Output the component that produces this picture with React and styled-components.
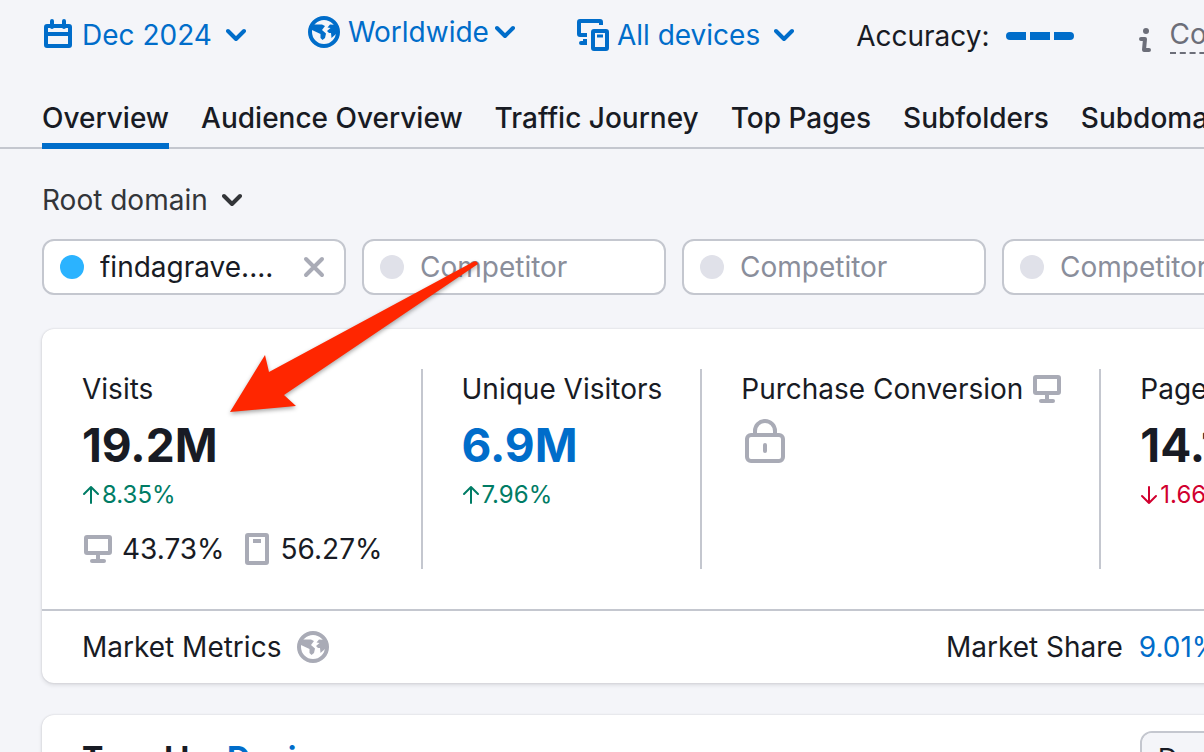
import React from "react";
import styled, { createGlobalStyle, css } from "styled-components";

const GlobalStyle = createGlobalStyle`
  * {
    box-sizing: border-box;
  }
  body {
    margin: 0;
    background: #f4f5f9;
    color: #181b24;
    font-family: Inter, "Liberation Sans", sans-serif;
    font-size: 28px;
    line-height: 40px;
  }
  button, input {
    font: inherit;
    color: inherit;
  }
  svg {
    display: block;
    flex: none;
  }
`;

const Screen = styled.div`
  position: relative;
  height: 100vh;
  overflow: hidden;
`;

const Page = styled.div`
  min-width: 1580px;
`;

const Filters = styled.div`
  display: flex;
  align-items: flex-start;
  gap: 62px;
  padding: 16px 42px 0;
`;

const PlainButton = styled.button`
  display: flex;
  align-items: center;
  padding: 0;
  border: 0;
  background: none;
  color: ${(props) => props.$color || "#006dca"};
  line-height: ${(props) => props.$line || "38px"};
  white-space: nowrap;
  cursor: pointer;
`;

const Label = styled.span`
  margin-right: ${(props) => (props.$tight ? "6px" : "14px")};
  svg + & {
    margin-left: 8px;
  }
`;

const Accuracy = styled.div`
  display: flex;
  align-items: center;
  gap: 16px;
  line-height: 40px;
`;

const Meter = styled.div`
  display: flex;
  gap: 4px;
  border-radius: 4px;
  overflow: hidden;
`;

const MeterBar = styled.span`
  width: 20px;
  height: 8px;
  background: #006dca;
`;

const Info = styled.div`
  display: flex;
  align-items: flex-end;
  gap: 18px;
  padding-left: 2px;
  color: #6c6e79;
  line-height: 36px;
`;

const InfoLink = styled.a`
  color: inherit;
  text-decoration: none;
  border-bottom: 2px dashed #6c6e79;
`;

const Tabs = styled.nav`
  display: flex;
  gap: 32px;
  margin-top: 42px;
  padding: 0 42px;
  box-shadow: inset 0 -2px #c4c7cf;
`;

const Tab = styled.a`
  padding-bottom: 5px;
  border-bottom: 6px solid ${(props) => (props.$active ? "#006dca" : "transparent")};
  color: inherit;
  font-weight: 500;
  text-decoration: none;
  white-space: nowrap;
`;

const Main = styled.main`
  padding: 32px 42px;
`;

const Domains = styled.div`
  display: flex;
  gap: 16px;
  margin: 20px 0 34px;
`;

const DomainBox = styled.div`
  display: flex;
  align-items: center;
  gap: 16px;
  width: 304px;
  height: 56px;
  padding: 0 18px 0 16px;
  border: 2px solid #c4c7cf;
  border-radius: 12px;
  background: #fff;
`;

const Dot = styled.span`
  flex: none;
  width: 24px;
  height: 24px;
  border-radius: 50%;
  background: ${(props) => props.$color};
`;

const DomainInput = styled.input`
  flex: 1;
  min-width: 0;
  padding: 0;
  border: 0;
  outline: 0;
  background: none;
  &::placeholder {
    color: #8a8e9b;
    opacity: 1;
  }
`;

const Card = styled.section`
  margin-bottom: 32px;
  border-radius: 12px;
  background: #fff;
  box-shadow: 0 0 2px rgba(25, 27, 35, 0.16), 0 2px 4px rgba(25, 27, 35, 0.12);
`;

const Metrics = styled.div`
  display: flex;
  padding: 40px;
`;

const Metric = styled.div`
  min-height: 200px;
  white-space: nowrap;
  & + & {
    margin-left: 38px;
    padding-left: 39px;
    border-left: 2px solid #c4c7cf;
  }
`;

const MetricName = styled.div`
  display: flex;
  align-items: center;
  gap: 8px;
`;

const valueText = css`
  display: block;
  margin: 8px 0 6px;
  font-size: 46px;
  font-weight: 700;
  line-height: 56px;
`;

const Value = styled.div`
  ${valueText}
`;

const ValueLink = styled.a`
  ${valueText}
  color: #006dca;
  text-decoration: none;
`;

const Change = styled.div`
  display: flex;
  align-items: center;
  gap: 1px;
  color: ${(props) => (props.$down ? "#d1002f" : "#007c65")};
  font-size: 24px;
  line-height: 32px;
`;

const Split = styled.div`
  display: flex;
  align-items: center;
  gap: 10px;
  margin-top: 18px;
`;

const SplitValue = styled.span`
  & + svg {
    margin-left: 10px;
  }
`;

const LockButton = styled(PlainButton)`
  margin-top: 8px;
`;

const Market = styled.div`
  display: grid;
  grid-template-columns: 3fr 2fr;
  gap: 36px;
  padding: 16px 40px;
  border-top: 2px solid #c4c7cf;
`;

const MarketItem = styled.div`
  display: flex;
  align-items: center;
  gap: 16px;
`;

const MarketLink = styled.a`
  color: #006dca;
  text-decoration: none;
`;

const TrendHead = styled.div`
  display: flex;
  align-items: flex-start;
  justify-content: space-between;
  padding: 16px 40px 40px;
`;

const TrendTitle = styled.h2`
  margin: 8px 0 0;
  font-size: 32px;
  font-weight: 700;
`;

const Periods = styled.div`
  display: flex;
  border: 2px solid #c4c7cf;
  border-radius: 12px;
  background: #fff;
  overflow: hidden;
`;

const Period = styled.button`
  height: 52px;
  padding: 0 16px;
  border: 0;
  background: ${(props) => (props.$active ? "#f4f5f9" : "none")};
  & + & {
    border-left: 2px solid #c4c7cf;
  }
`;

const Pointer = styled.svg`
  position: absolute;
  top: 250px;
  left: 220px;
  pointer-events: none;
  filter: drop-shadow(0 2px 2px rgba(0, 0, 0, 0.35));
`;

const Chevron = () => (
  <svg width="20" height="14" viewBox="0 0 20 14" fill="none" stroke="currentColor" strokeWidth="4" strokeLinecap="round" strokeLinejoin="round" aria-hidden="true">
    <path d="M2 3l8 8 8-8" />
  </svg>
);

const CalendarIcon = () => (
  <svg width="32" height="32" viewBox="0 0 32 32" fill="none" stroke="currentColor" strokeWidth="4" aria-hidden="true">
    <rect x="4" y="7" width="24" height="20" rx="1" />
    <path d="M4 15h24" />
    <path d="M10 2v6M22 2v6" strokeLinecap="round" />
  </svg>
);

const GlobeIcon = () => (
  <svg width="32" height="32" viewBox="0 0 32 32" aria-hidden="true">
    <circle cx="16" cy="16" r="14" fill="none" stroke="currentColor" strokeWidth="4" />
    <path d="M3 11l3-2.500h8l3 1.500-3 4 4 3.500-1 4.500-2.500 2-2-2v-4L4 14z" fill="currentColor" />
    <path d="M29 9l-7-.5-2.500 3 3 .5-3.500 3 2 2h2l.5 5 4.500-4 2-4z" fill="currentColor" />
  </svg>
);

const DevicesIcon = () => (
  <svg width="32" height="32" viewBox="0 0 32 32" fill="none" stroke="currentColor" strokeWidth="4" aria-hidden="true">
    <path d="M24 6V3a1 1 0 0 0-1-1H3a1 1 0 0 0-1 1v12a1 1 0 0 0 1 1h7" />
    <path d="M10 20v6H4a2 2 0 0 1 0-4h2v-2z" fill="currentColor" stroke="none" />
    <rect x="16" y="12" width="14" height="18" rx="1" />
    <path d="M20 17h6" strokeWidth="3" />
  </svg>
);

const DesktopIcon = () => (
  <svg width="30" height="30" viewBox="0 0 30 30" fill="none" stroke="#a9abb6" strokeWidth="4" aria-hidden="true">
    <rect x="4" y="3" width="24" height="16" rx="1" />
    <path d="M16 21v6" />
    <path d="M10 27h12" strokeLinecap="round" />
  </svg>
);

const MobileIcon = () => (
  <svg width="26" height="32" viewBox="0 0 26 32" fill="none" stroke="#a9abb6" strokeWidth="4" aria-hidden="true">
    <rect x="2" y="2" width="20" height="28" rx="1" />
    <path d="M8 8h8" />
  </svg>
);

const LockIcon = () => (
  <svg width="48" height="48" viewBox="0 0 48 48" fill="none" stroke="#a9abb6" strokeWidth="4" aria-hidden="true">
    <rect x="6" y="18" width="36" height="26" rx="4" />
    <path d="M14 18v-4a10 10 0 0 1 20 0v4" />
    <path d="M24 28v6" strokeLinecap="round" />
  </svg>
);

const CloseIcon = () => (
  <svg width="24" height="24" viewBox="0 0 24 24" fill="none" stroke="#a9abb6" strokeWidth="4" strokeLinecap="round" aria-hidden="true">
    <path d="M4 4l16 16M20 4L4 20" />
  </svg>
);

const InfoIcon = () => (
  <svg width="14" height="26" viewBox="0 0 14 26" fill="none" stroke="currentColor" strokeWidth="4" strokeLinecap="round" strokeLinejoin="round" aria-hidden="true">
    <circle cx="8" cy="3" r="3" fill="currentColor" stroke="none" />
    <path d="M3 11h4L6 22h5" />
  </svg>
);

const ArrowIcon = ({ down }) => (
  <svg width="19" height="20" viewBox="0 0 19 20" fill="none" stroke="currentColor" strokeWidth="2" strokeLinecap="round" strokeLinejoin="round" aria-hidden="true">
    <path d={down ? "M9 2v16M2 11l7 7 7-7" : "M9 18V2M2 9l7-7 7 7"} />
  </svg>
);

const tabs = [
  "Overview",
  "Audience Overview",
  "Traffic Journey",
  "Top Pages",
  "Subfolders",
  "Subdomains",
];

const App = () => {
  return (
    <Screen>
      <GlobalStyle />
      <Page>
        <Filters>
          <PlainButton>
            <CalendarIcon />
            <Label>Dec 2024</Label>
            <Chevron />
          </PlainButton>
          <PlainButton $line="32px">
            <GlobeIcon />
            <Label $tight>Worldwide</Label>
            <Chevron />
          </PlainButton>
          <PlainButton>
            <DevicesIcon />
            <Label>All devices</Label>
            <Chevron />
          </PlainButton>
          <Accuracy>
            Accuracy:
            <Meter>
              <MeterBar />
              <MeterBar />
              <MeterBar />
            </Meter>
          </Accuracy>
          <Info>
            <InfoIcon />
            <InfoLink href="#confidence">Confidence</InfoLink>
          </Info>
        </Filters>

        <Tabs>
          {tabs.map((tab, key) => (
            <Tab key={tab} href="#" $active={key === 0}>
              {tab}
            </Tab>
          ))}
        </Tabs>

        <Main>
          <PlainButton $color="#333539">
            <Label>Root domain</Label>
            <Chevron />
          </PlainButton>

          <Domains>
            <DomainBox>
              <Dot $color="#2bb3ff" />
              <DomainInput aria-label="Domain" defaultValue="findagrave...." />
              <PlainButton aria-label="Clear domain">
                <CloseIcon />
              </PlainButton>
            </DomainBox>
            {[1, 2, 3].map((key) => (
              <DomainBox key={key}>
                <Dot $color="#e0e1e9" />
                <DomainInput aria-label={"Competitor " + key} placeholder="Competitor" />
              </DomainBox>
            ))}
          </Domains>

          <Card>
            <Metrics>
              <Metric>
                <MetricName>Visits</MetricName>
                <Value>19.2M</Value>
                <Change>
                  <ArrowIcon />
                  8.35%
                </Change>
                <Split>
                  <DesktopIcon />
                  <SplitValue>43.73%</SplitValue>
                  <MobileIcon />
                  <SplitValue>56.27%</SplitValue>
                </Split>
              </Metric>
              <Metric>
                <MetricName>Unique Visitors</MetricName>
                <ValueLink href="#visitors">6.9M</ValueLink>
                <Change>
                  <ArrowIcon />
                  7.96%
                </Change>
              </Metric>
              <Metric>
                <MetricName>
                  Purchase Conversion
                  <DesktopIcon />
                </MetricName>
                <LockButton aria-label="Unlock purchase conversion">
                  <LockIcon />
                </LockButton>
              </Metric>
              <Metric>
                <MetricName>Pages / Visit</MetricName>
                <Value>14.1</Value>
                <Change $down>
                  <ArrowIcon down />
                  1.66%
                </Change>
              </Metric>
            </Metrics>
            <Market>
              <MarketItem>
                Market Metrics
                <PlainButton $color="#a9abb6" aria-label="Market location">
                  <GlobeIcon />
                </PlainButton>
              </MarketItem>
              <MarketItem>
                Market Share
                <MarketLink href="#share">9.01%</MarketLink>
              </MarketItem>
            </Market>
          </Card>

          <Card>
            <TrendHead>
              <TrendTitle>
                Trend by <MarketLink href="#devices">Devices</MarketLink>
              </TrendTitle>
              <Periods>
                <Period $active>Days</Period>
                <Period>Weeks</Period>
                <Period>Months</Period>
              </Periods>
            </TrendHead>
          </Card>
        </Main>
      </Page>

      <Pointer width="270" height="175" viewBox="220 250 270 175" aria-hidden="true">
        <path
          d="M230 412L265 355L269 372L473 262Q477 260 478 264L284 395L296 406Z"
          fill="#ff2600"
        />
      </Pointer>
    </Screen>
  );
};

export default App;
